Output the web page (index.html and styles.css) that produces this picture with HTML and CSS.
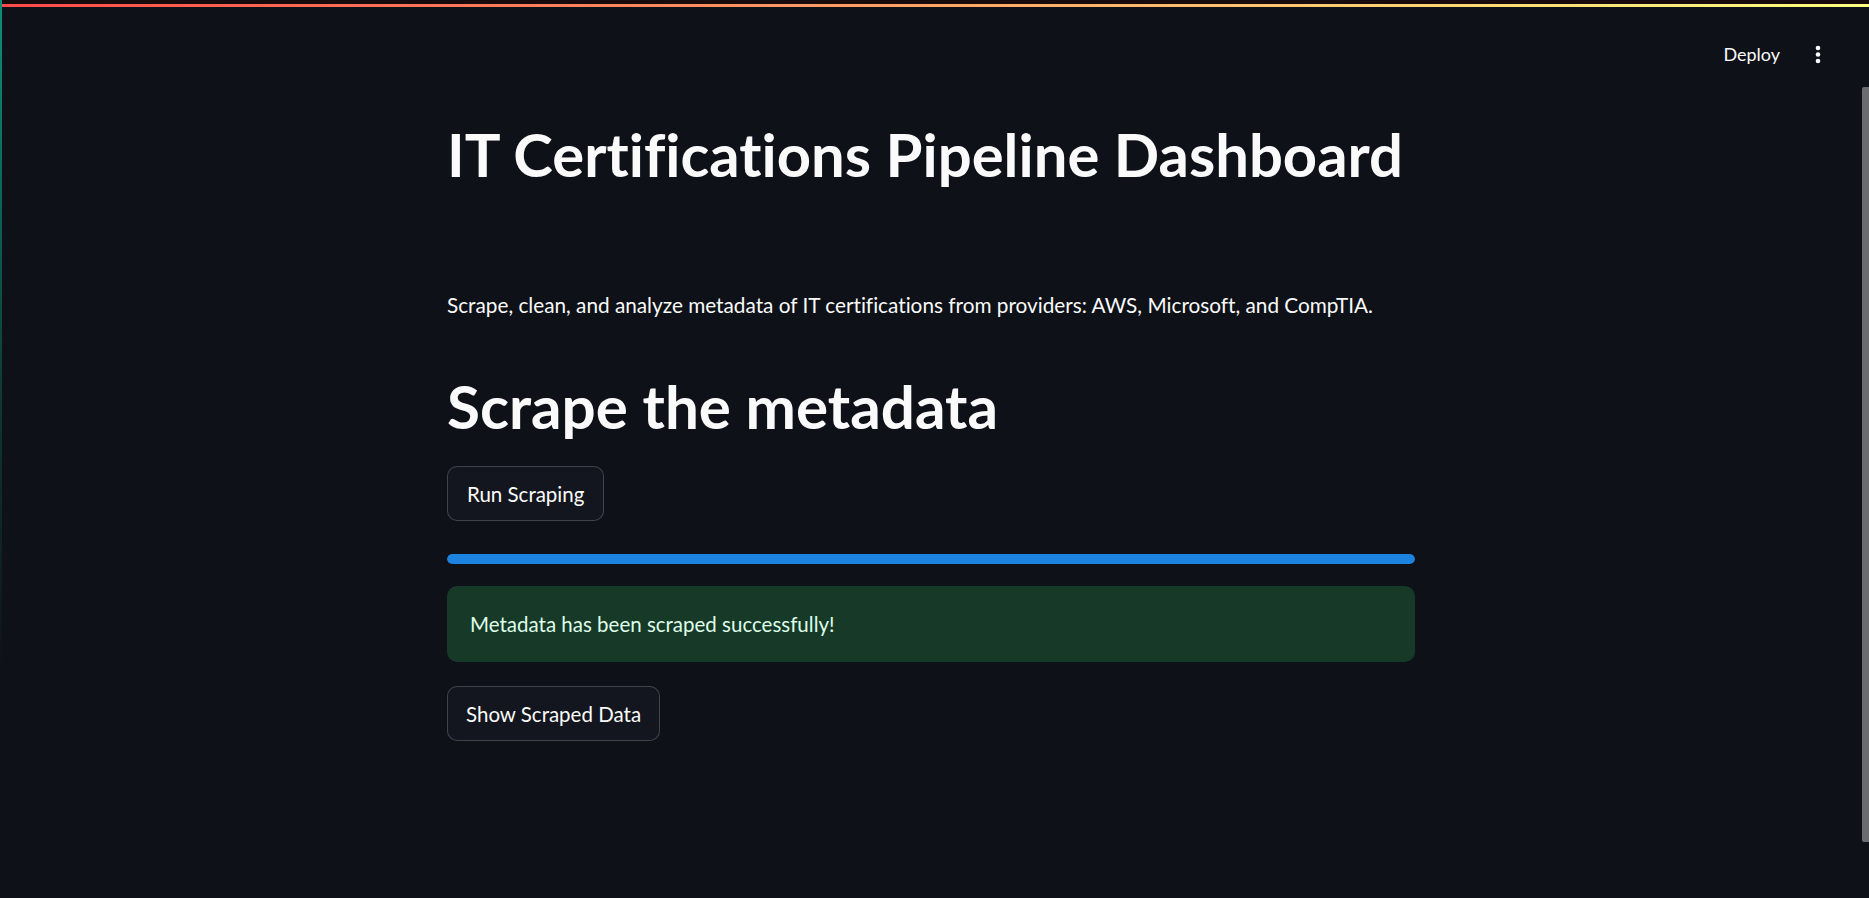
FILE: index.html
```html
<!DOCTYPE html>
<html lang="en">
<head>
<meta charset="utf-8">
<title>IT Certifications Pipeline Dashboard</title>
<link rel="stylesheet" href="styles.css">
</head>
<body>
<div class="app">
  <div class="topstrip"></div>
  <div class="decoration"></div>
  <header class="header">
    <span class="deploy">Deploy</span>
    <button class="menu" aria-label="Main menu">
      <svg width="20" height="21" viewBox="0 0 20 21"><circle cx="10" cy="4" r="2.3" fill="#fafafa"/><circle cx="10" cy="10.5" r="2.3" fill="#fafafa"/><circle cx="10" cy="17" r="2.3" fill="#fafafa"/></svg>
    </button>
  </header>
  <div class="viewport">
    <main class="main">
      <h1 class="title">IT Certifications Pipeline Dashboard</h1>
      <p class="lead">Scrape, clean, and analyze metadata of IT certifications from providers: AWS, Microsoft, and CompTIA.</p>
      <h1 class="title section">Scrape the metadata</h1>
      <button class="btn btn-run">Run Scraping</button>
      <div class="progress"><div class="progress-fill" style="width:100%"></div></div>
      <div class="alert">Metadata has been scraped successfully!</div>
      <button class="btn btn-show">Show Scraped Data</button>
    </main>
  </div>
  <div class="scrollbar"></div>
  <div class="edge"></div>
</div>
</body>
</html>
```
FILE: styles.css
```css
html, body {
  margin: 0;
  padding: 0;
  background: #0e1117;
  color: #fafafa;
  font-family: "Lato", "Liberation Sans", sans-serif;
  font-variant-ligatures: none;
}
.app {
  position: relative;
  height: 898px;
  overflow: hidden;
}
.topstrip {
  height: 4px;
  background: #170b0e;
}
.decoration {
  height: 3px;
  background: linear-gradient(90deg, #ff4b4b, #ffff80);
}
.header {
  height: 94px;
  display: flex;
  justify-content: flex-end;
  align-items: center;
  padding-right: 41px;
  gap: 28px;
}
.deploy {
  font-size: 18px;
  color: #fafafa;
}
.menu {
  background: none;
  border: 0;
  padding: 0;
  width: 20px;
  height: 21px;
  display: flex;
}
.viewport {
  padding-right: 7px;
}
.main {
  width: 968px;
  margin: 0 auto;
  display: flex;
  flex-direction: column;
  align-items: flex-start;
}
.title {
  margin: 17px 0 0;
  font-size: 59.8px;
  line-height: 72px;
  font-weight: 700;
  color: #fafafa;
}
.lead {
  margin: 99px 0 0;
  font-size: 20.75px;
  line-height: 32px;
}
.section {
  margin-top: 49px;
  font-size: 60.2px;
}
.btn {
  font-family: inherit;
  font-size: 20.5px;
  color: #fafafa;
  background: #13161e;
  border: 1px solid rgba(250, 250, 250, 0.2);
  border-radius: 10px;
  height: 55px;
  padding: 0 18px;
}
.btn-run {
  margin-top: 24px;
  padding: 0 19px;
}
.progress {
  margin-top: 33px;
  width: 100%;
  height: 10px;
  border-radius: 5px;
  background: #262730;
  overflow: hidden;
}
.progress-fill {
  height: 100%;
  background: #1c83e1;
  border-radius: 5px;
}
.alert {
  margin-top: 22px;
  width: 100%;
  box-sizing: border-box;
  height: 76px;
  display: flex;
  align-items: center;
  padding: 0 23px;
  background: #173928;
  color: #dffde9;
  border-radius: 10px;
  font-size: 20.5px;
}
.btn-show {
  margin-top: 24px;
}
.scrollbar {
  position: absolute;
  right: 0;
  top: 87px;
  width: 7px;
  height: 755px;
  background: #6b6c70;
  border-radius: 2px 0 0 2px;
}
.edge {
  position: absolute;
  left: 0;
  top: 0;
  width: 2px;
  height: 100%;
  background: linear-gradient(180deg, #0d8f7a 0%, rgba(13, 143, 122, 0.3) 45%, rgba(13, 143, 122, 0) 75%);
}
```
